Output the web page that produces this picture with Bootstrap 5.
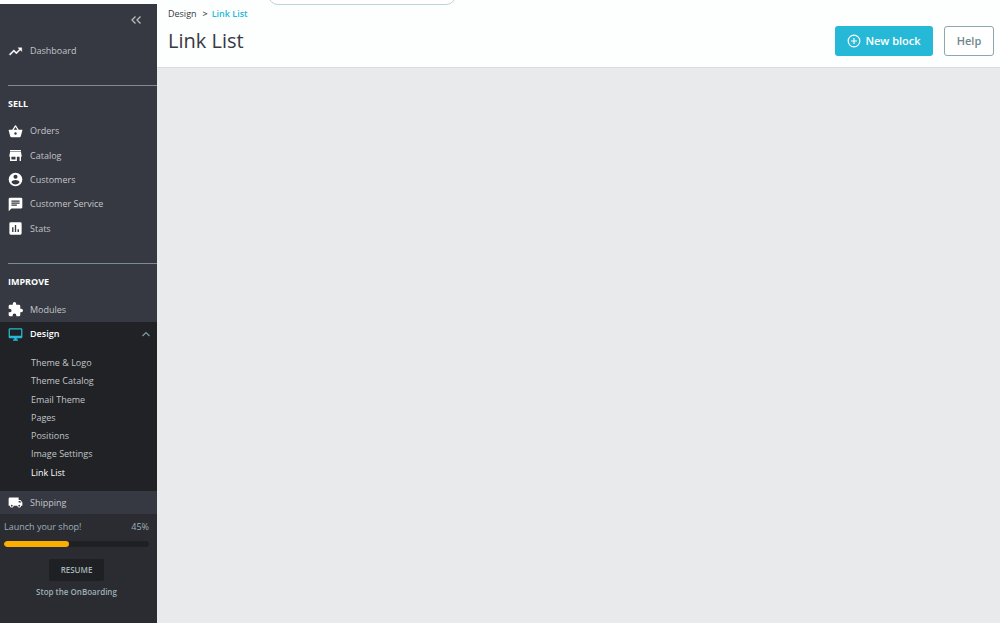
<!DOCTYPE html>
<html lang="en">
<head>
<meta charset="utf-8">
<meta name="viewport" content="width=device-width, initial-scale=1">
<title>Link List</title>
<link href="https://cdn.jsdelivr.net/npm/bootstrap@5.3.0/dist/css/bootstrap.min.css" rel="stylesheet">
<style>
  body { font-family: "Open Sans", "Noto Sans", sans-serif; font-size: 9px; line-height: 18px; color: #363a41; background: #e8eaeb; }
  a { text-decoration: none; color: inherit; }
  .topbar { height: 4px; background: #fdfefe; }
  .search-box { width: 188px; height: 28px; margin: 0 0 -1px 268px; padding: 0 12px; border: 1px solid #bbd3d9; border-radius: 10px; background: #fff; position: relative; z-index: 2; }
  .sidebar { width: 157px; background: #363942; color: #c2c5c8; }
  .collapse-btn { height: 16px; margin: 8px 15px 0 0; color: #bebebe; }
  .menu-link { display: flex; align-items: center; height: 100%; min-height: 23px; padding-left: 8px; gap: 7px; }
  .menu-link svg { width: 15px; height: 15px; flex: none; fill: #fff; }
  .dash { margin: 11px 0 22px; height: 24px; }
  .menu-head { margin: 0 0 0 8px; padding-top: 9px; height: 34px; border-top: 1px solid #7d8b93; font-size: 9px; line-height: 18px; font-weight: 700; color: #fff; }
  .sell-list { display: grid; grid-auto-rows: 1fr; height: 122px; margin-bottom: 22px; }
  .module-item { height: 25px; }
  .open-item { background: #202226; }
  .open-item .menu-link { height: 24px; color: #fff; font-weight: 600; }
  .open-item .menu-link svg.screen { fill: #25b9d7; }
  .open-item .menu-link svg.caret { width: 8px; height: 8px; margin: 0 7px 0 auto; }
  .submenu { display: grid; grid-auto-rows: 1fr; height: 128px; margin: 8px 0 9px 31px; }
  .onboarding { background: #2a2c32; color: #9fb0b7; padding: 4px 8px 0 4px; }
  .onboarding .progress { height: 6px; margin-top: 5px; border-radius: 3px; background: #1e2023; }
  .onboarding .progress-bar { background: #fbb000; border-radius: 3px; }
  .resume-btn { width: 55px; height: 22px; margin-top: 12px; border-radius: 2px; background: #1e2023; color: #a8b6bc; font-size: 8px; font-weight: 600; }
  .stop-link { font-size: 8px; font-weight: 600; margin-top: 2px; }
  .page-head { height: 64px; padding: 1px 6px 0 11px; background: #fdfefe; border-bottom: 1px solid #d9dcde; }
  .crumbs { font-size: 9px; --bs-breadcrumb-divider: '>'; --bs-breadcrumb-item-padding-x: 4px; }
  .crumbs .breadcrumb-item + .breadcrumb-item::before { color: #363a41; }
  .crumbs .breadcrumb-item + .breadcrumb-item { margin-left: 2px; color: #25b9d7; }
  .page-title { font-size: 20px; line-height: 28px; margin: 4px 0 0; font-weight: 400; }
  .head-actions { gap: 11px; padding-top: 9px; }
  .head-btn { height: 30px; border-radius: 3px; font-size: 11px; line-height: 16px; font-weight: 600; }
  .new-btn { width: 98px; background: #25b9d7; color: #fff; }
  .help-btn { width: 50px; border: 1px solid #91a5ac; background: #fff; color: #6c868e; }
</style>
</head>
<body>
<div class="d-flex flex-column min-vh-100">
  <header class="topbar d-flex align-items-end">
    <input class="search-box" type="search" aria-label="Search">
  </header>
  <div class="d-flex flex-grow-1">
    <nav class="sidebar d-flex flex-column flex-shrink-0" aria-label="Main menu">
      <button type="button" class="collapse-btn btn p-0 border-0 d-flex align-self-end align-items-center" aria-label="Collapse menu">
        <svg width="12" height="10" viewBox="0 0 12 10" fill="none" stroke="currentColor" stroke-width="1.3"><path d="M5.500 1.500L2 5l3.500 3.500M10.500 1.500L7 5l3.500 3.500"/></svg>
      </button>
      <div class="dash">
        <a class="menu-link" href="#"><svg viewBox="0 0 24 24"><path d="M16 6l2.290 2.290-4.880 4.880-4-4L2 16.590 3.410 18l6-6 4 4 6.300-6.290L22 12V6z" stroke="#fff" stroke-width=".6"/></svg>Dashboard</a>
      </div>
      <h2 class="menu-head">SELL</h2>
      <ul class="sell-list list-unstyled">
        <li><a class="menu-link" href="#"><svg viewBox="0 0 24 24"><path d="M17.210 9l-4.380-6.560a1 1 0 0 0-1.660 0L6.790 9H2a1 1 0 0 0-.96 1.270l2.540 9.270A2 2 0 0 0 5.500 21h13a2 2 0 0 0 1.930-1.460l2.540-9.270A1 1 0 0 0 22 9h-4.790zM9 9l3-4.400L15 9H9zm3 8a2 2 0 1 1 0-4 2 2 0 0 1 0 4z"/></svg>Orders</a></li>
        <li><a class="menu-link" href="#"><svg viewBox="1 1 22 22"><path d="M20 4H4v2h16V4zm1 10v-2l-1-5H4l-1 5v2h1v6h10v-6h4v6h2v-6h1zm-9 4H6v-4h6v4z"/></svg>Catalog</a></li>
        <li><a class="menu-link" href="#"><svg viewBox="1 1 22 22"><path d="M12 2a10 10 0 1 0 0 20 10 10 0 0 0 0-20zm0 3a3 3 0 1 1 0 6 3 3 0 0 1 0-6zm0 14.200A7.200 7.200 0 0 1 6 15.980c.03-1.990 4-3.080 6-3.080s5.970 1.090 6 3.080a7.200 7.200 0 0 1-6 3.220z"/></svg>Customers</a></li>
        <li><a class="menu-link" href="#"><svg viewBox="1 1 22 22"><path d="M20 2H4a2 2 0 0 0-2 2v18l4-4h14a2 2 0 0 0 2-2V4a2 2 0 0 0-2-2zM6 6h12v2H6V6zm8 8H6v-2h8v2zm4-3H6V9h12v2z"/></svg>Customer Service</a></li>
        <li><a class="menu-link" href="#"><svg viewBox="1 1 22 22"><path d="M19 3H5a2 2 0 0 0-2 2v14a2 2 0 0 0 2 2h14a2 2 0 0 0 2-2V5a2 2 0 0 0-2-2zM9 17H7v-7h2v7zm4 0h-2V7h2v10zm4 0h-2v-4h2v4z"/></svg>Stats</a></li>
      </ul>
      <h2 class="menu-head">IMPROVE</h2>
      <ul class="list-unstyled mb-0">
        <li class="module-item"><a class="menu-link" href="#"><svg viewBox="1 1 22 22"><path d="M20.500 11H19V7a2 2 0 0 0-2-2h-4V3.500a2.500 2.500 0 0 0-5 0V5H4a2 2 0 0 0-2 2v3.800h1.500a2.700 2.700 0 0 1 0 5.400H2V20a2 2 0 0 0 2 2h3.800v-1.500a2.700 2.700 0 0 1 5.400 0V22H17a2 2 0 0 0 2-2v-4h1.500a2.500 2.500 0 0 0 0-5z"/></svg>Modules</a></li>
        <li class="open-item">
          <a class="menu-link" href="#" aria-expanded="true"><svg class="screen" viewBox="0 0 24 24"><path d="M21 2H3a2 2 0 0 0-2 2v12a2 2 0 0 0 2 2h7v2H8v2h8v-2h-2v-2h7a2 2 0 0 0 2-2V4a2 2 0 0 0-2-2zm0 12H3V4h18v10z"/></svg>Design
            <svg class="caret" viewBox="0 0 8 8"><path d="M.5 6L4 2.500 7.500 6" fill="none" stroke="#7f9ba3" stroke-width="1.200"/></svg></a>
          <div class="d-flex">
            <ul class="submenu list-unstyled">
              <li><a href="#">Theme &amp; Logo</a></li>
              <li><a href="#">Theme Catalog</a></li>
              <li><a href="#">Email Theme</a></li>
              <li><a href="#">Pages</a></li>
              <li><a href="#">Positions</a></li>
              <li><a href="#">Image Settings</a></li>
              <li><a href="#" class="text-white" aria-current="page">Link List</a></li>
            </ul>
          </div>
        </li>
        <li><a class="menu-link" href="#"><svg viewBox="0 0 24 24"><path d="M20 8h-3V4H3a2 2 0 0 0-2 2v11h2a3 3 0 0 0 6 0h6a3 3 0 0 0 6 0h2v-5l-3-4zM6 18.500a1.500 1.500 0 1 1 0-3 1.500 1.500 0 0 1 0 3zm13.500-9l1.960 2.500H17V9.500h2.500zm-1.500 9a1.500 1.500 0 1 1 0-3 1.500 1.500 0 0 1 0 3z"/></svg>Shipping</a></li>
      </ul>
      <section class="onboarding flex-grow-1 d-flex flex-column">
        <div class="d-flex justify-content-between"><span>Launch your shop!</span><span>45%</span></div>
        <div class="progress" role="progressbar" aria-label="Onboarding progress" aria-valuenow="45" aria-valuemin="0" aria-valuemax="100">
          <div class="progress-bar" style="width:45%"></div>
        </div>
        <button type="button" class="resume-btn btn border-0 p-0 align-self-center">RESUME</button>
        <a class="stop-link align-self-center" href="#">Stop the OnBoarding</a>
      </section>
    </nav>
    <main class="flex-grow-1">
      <div class="page-head d-flex justify-content-between">
        <div>
          <nav aria-label="Breadcrumb">
            <ol class="crumbs breadcrumb mb-0">
              <li class="breadcrumb-item"><a href="#">Design</a></li>
              <li class="breadcrumb-item fw-semibold"><a href="#">Link List</a></li>
            </ol>
          </nav>
          <h1 class="page-title">Link List</h1>
        </div>
        <div class="head-actions d-flex align-items-center">
          <button type="button" class="head-btn new-btn btn border-0 p-0 d-flex align-items-center justify-content-center gap-1">
            <svg width="14" height="14" viewBox="0 0 14 14" fill="none" stroke="currentColor" stroke-width="1.200"><circle cx="7" cy="7" r="5.800"/><path d="M7 4v6M4 7h6"/></svg>New block
          </button>
          <button type="button" class="head-btn help-btn btn p-0">Help</button>
        </div>
      </div>
    </main>
  </div>
</div>
<script src="https://cdn.jsdelivr.net/npm/bootstrap@5.3.0/dist/js/bootstrap.bundle.min.js"></script>
</body>
</html>
